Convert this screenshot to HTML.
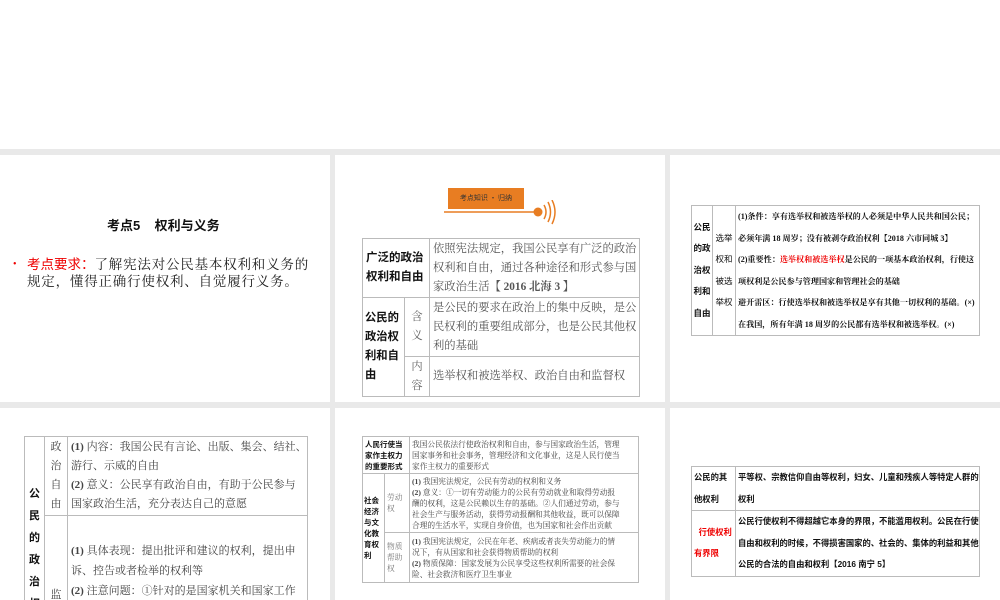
<!DOCTYPE html>
<html><head><meta charset="utf-8"><style>
*{margin:0;padding:0;box-sizing:border-box}
body{width:1000px;height:600px;overflow:hidden;background:#e9e9e9;position:relative;font-family:"Liberation Serif","Noto Serif CJK SC",serif;color:#333}
.top{position:absolute;left:0;top:0;width:1000px;height:149px;background:#fff}
.s{position:absolute;background:#fff;overflow:hidden}
table{position:absolute;border-collapse:collapse;table-layout:fixed}
td{border:1px solid #bbb;vertical-align:middle;overflow:hidden}
.b{font-family:"Liberation Sans","Noto Sans CJK SC",sans-serif;font-weight:bold;color:#111}
.red{color:#e00}
</style></head><body>
<div class="top"></div>

<div class="s" style="left:0;top:155px;width:330px;height:247px">
 <div class="b" style="position:absolute;left:107px;top:60px;font-size:13px">考点5&nbsp;&nbsp;&nbsp;&nbsp;权利与义务</div>
 <div class="red" style="position:absolute;left:13px;top:104px;font-size:10px">•</div>
 <div style="position:absolute;left:27px;top:101px;font-size:13.5px;line-height:17px;color:#222;width:300px;letter-spacing:0.8px">
  <span class="red" style="font-family:'Liberation Sans','Noto Sans CJK SC',sans-serif;letter-spacing:0">考点要求：</span>了解宪法对公民基本权利和义务的<br>规定，懂得正确行使权利、自觉履行义务。</div>
</div>

<div class="s" style="left:335px;top:155px;width:330px;height:247px">
 <div style="position:absolute;left:113px;top:33px;width:76px;height:21px;background:#e87d22;color:#333;font-size:7px;text-align:center;line-height:21px;font-family:'Noto Sans CJK SC',sans-serif">考点知识 · 归纳</div>
 <svg style="position:absolute;left:105px;top:45px" width="120" height="30"><line x1="4" y1="12" x2="96" y2="12" stroke="#e87d22" stroke-width="1.5"/><circle cx="98" cy="12" r="4.5" fill="#e87d22"/><path d="M104 5 Q108 12 104 19 M108 2 Q113 12 108 22 M112 0 Q118 12 112 24" stroke="#e87d22" fill="none" stroke-width="1.5"/></svg>
 <table style="left:27px;top:83px;width:277px;font-size:11.3px;line-height:19px">
  <colgroup><col style="width:42px"><col style="width:25px"><col style="width:210px"></colgroup>
  <tr style="height:59px"><td colspan="2" class="b" style="padding-left:3px;font-size:11.5px">广泛的政治<br>权利和自由</td><td style="padding-left:3px;color:#555">依照宪法规定，我国公民享有广泛的政治权利和自由，通过各种途径和形式参与国家政治生活<b>【 2016 北海 3 】</b></td></tr>
  <tr style="height:59px"><td rowspan="2" class="b" style="padding-left:2px">公民的<br>政治权<br>利和自<br>由</td><td style="text-align:center;color:#666">含<br>义</td><td style="padding-left:3px;color:#555">是公民的要求在政治上的集中反映，是公民权利的重要组成部分，也是公民其他权利的基础</td></tr>
  <tr style="height:40px"><td style="text-align:center;color:#666">内<br>容</td><td style="padding-left:3px;color:#555">选举权和被选举权、政治自由和监督权</td></tr>
 </table>
</div>

<div class="s" style="left:670px;top:155px;width:330px;height:247px">
 <table style="left:21px;top:50px;width:288px;font-size:8.1px;line-height:21.5px" class="b">
  <colgroup><col style="width:21px"><col style="width:23px"><col style="width:244px"></colgroup>
  <tr style="height:129px"><td style="text-align:center;font-size:8.5px">公民<br>的政<br>治权<br>利和<br>自由</td><td style="text-align:center;font-weight:normal;font-size:8.5px">选举<br>权和<br>被选<br>举权</td><td style="padding-left:2px;font-weight:bold;color:#111;font-family:'Liberation Serif','Noto Serif CJK SC',serif;white-space:nowrap">(1)条件：享有选举权和被选举权的人必须是中华人民共和国公民；<br>必须年满 18 周岁；没有被剥夺政治权利【2018 六市同城 3】<br>(2)重要性：<span class="red">选举权和被选举权</span>是公民的一项基本政治权利，行使这<br>项权利是公民参与管理国家和管理社会的基础<br>避开雷区：行使选举权和被选举权是享有其他一切权利的基础。(×)<br>在我国，所有年满 18 周岁的公民都有选举权和被选举权。(×)</td></tr>
 </table>
</div>

<div class="s" style="left:0;top:408px;width:330px;height:192px">
 <table style="left:24px;top:28px;width:283px;font-size:11px;line-height:19px;color:#444">
  <colgroup><col style="width:20px"><col style="width:23px"><col style="width:240px"></colgroup>
  <tr style="height:78px"><td rowspan="2" class="b" style="text-align:center;line-height:22px;vertical-align:top;padding-top:46px">公<br>民<br>的<br>政<br>治<br>权<br>利</td><td style="text-align:center">政<br>治<br>自<br>由</td><td style="padding-left:3px;white-space:nowrap"><b>(1)</b> 内容：我国公民有言论、出版、集会、结社、<br>游行、示威的自由<br><b>(2)</b> 意义：公民享有政治自由，有助于公民参与<br>国家政治生活，充分表达自己的意愿</td></tr>
  <tr style="height:120px"><td style="text-align:center;vertical-align:top;padding-top:70px">监</td><td style="padding-left:3px;vertical-align:top;padding-top:25px;line-height:20px;white-space:nowrap"><b>(1)</b> 具体表现：提出批评和建议的权利，提出申<br>诉、控告或者检举的权利等<br><b>(2)</b> 注意问题：①针对的是国家机关和国家工作</td></tr>
 </table>
</div>

<div class="s" style="left:335px;top:408px;width:330px;height:192px">
 <table style="left:27px;top:28px;width:276px;font-size:7.7px;line-height:11px;color:#444">
  <colgroup><col style="width:22px"><col style="width:25px"><col style="width:229px"></colgroup>
  <tr style="height:37px"><td colspan="2" class="b" style="padding-left:2px;font-size:7.5px">人民行使当<br>家作主权力<br>的重要形式</td><td style="padding-left:2px;white-space:nowrap">我国公民依法行使政治权利和自由，参与国家政治生活，管理<br>国家事务和社会事务，管理经济和文化事业，这是人民行使当<br>家作主权力的重要形式</td></tr>
  <tr style="height:59px"><td rowspan="2" class="b" style="padding-left:1px;font-size:7.5px">社会<br>经济<br>与文<br>化教<br>育权<br>利</td><td style="padding-left:2px;color:#777">劳动<br>权</td><td style="padding-left:2px;white-space:nowrap"><b>(1)</b> 我国宪法规定，公民有劳动的权利和义务<br><b>(2)</b> 意义：①一切有劳动能力的公民有劳动就业和取得劳动报<br>酬的权利，这是公民赖以生存的基础。②人们通过劳动，参与<br>社会生产与服务活动，获得劳动报酬和其他收益，既可以保障<br>合理的生活水平，实现自身价值，也为国家和社会作出贡献</td></tr>
  <tr style="height:50px"><td style="padding-left:2px;color:#777">物质<br>帮助<br>权</td><td style="padding-left:2px;white-space:nowrap"><b>(1)</b> 我国宪法规定，公民在年老、疾病或者丧失劳动能力的情<br>况下，有从国家和社会获得物质帮助的权利<br><b>(2)</b> 物质保障：国家发展为公民享受这些权利所需要的社会保<br>险、社会救济和医疗卫生事业</td></tr>
 </table>
</div>

<div class="s" style="left:670px;top:408px;width:330px;height:192px">
 <table class="b" style="left:21px;top:58px;width:288px;font-size:8.3px;line-height:21.5px">
  <colgroup><col style="width:44px"><col style="width:244px"></colgroup>
  <tr style="height:43px"><td style="padding-left:2px">公民的其<br>他权利</td><td style="padding-left:2px;white-space:nowrap">平等权、宗教信仰自由等权利，妇女、儿童和残疾人等特定人群的<br>权利</td></tr>
  <tr style="height:64px"><td class="red" style="padding-left:2px">&nbsp;&nbsp;行使权利<br>有界限</td><td style="padding-left:2px;white-space:nowrap">公民行使权利不得超越它本身的界限，不能滥用权利。公民在行使<br>自由和权利的时候，不得损害国家的、社会的、集体的利益和其他<br>公民的合法的自由和权利【2016 南宁 5】</td></tr>
 </table>
</div>
</body></html>
